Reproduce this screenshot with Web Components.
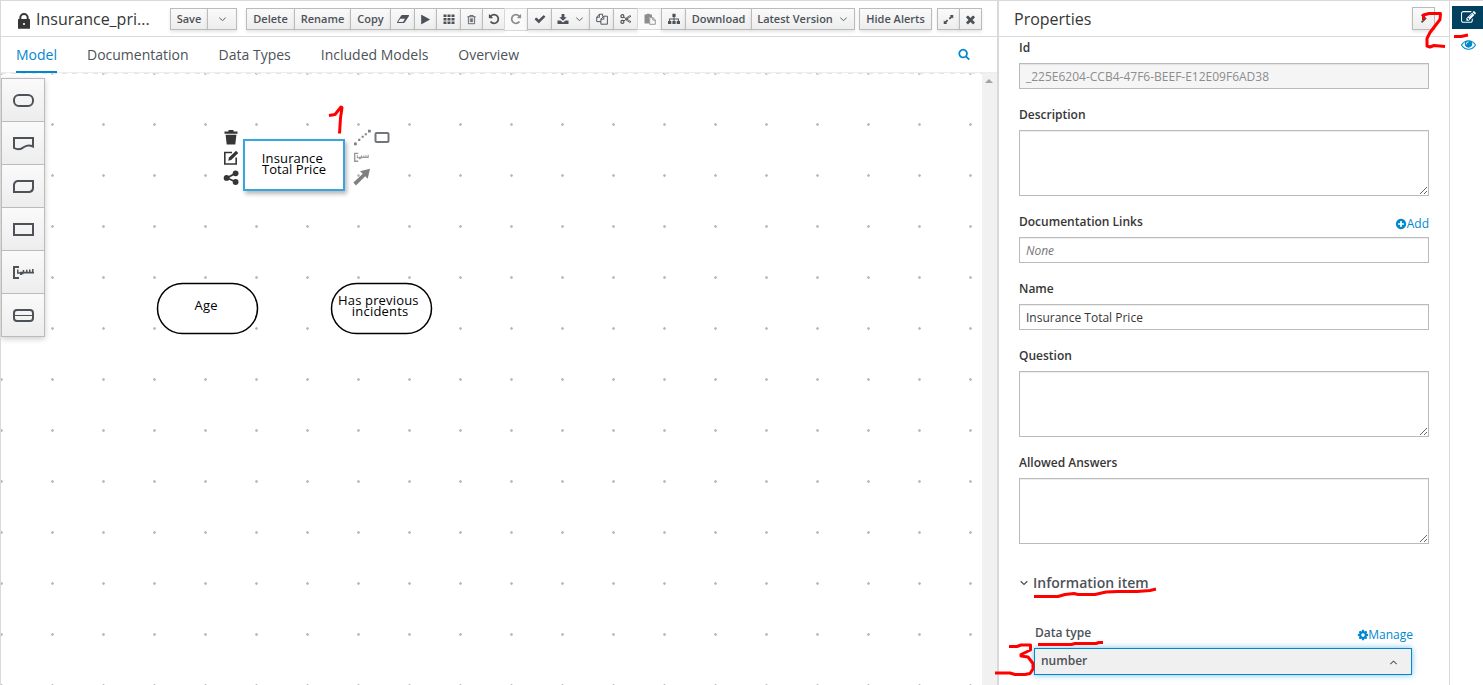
<!DOCTYPE html>
<html lang="en">
<head>
<meta charset="utf-8">
<title>Insurance pricing - DMN editor</title>
<style>
  html, body { margin: 0; height: 100%; overflow: hidden; background: #fff; }
  body { font-family: "Open Sans", "Liberation Sans", sans-serif; color: #363636; font-size: 12px; }
</style>
</head>
<body>
<dmn-app></dmn-app>
<script>
const FA = {
  check: 'M1671 566q0 40-28 68l-724 724-136 136q-28 28-68 28t-68-28l-136-136-362-362q-28-28-28-68t28-68l136-136q28-28 68-28t68 28l294 295 656-657q28-28 68-28t68 28l136 136q28 28 28 68z',
  play: 'M1576 927l-1328 738q-23 13-39.500 3t-16.500-36v-1472q0-26 16.500-36t39.500 3l1328 738q23 13 23 31t-23 31z',
  search: 'M1216 832q0-185-131.500-316.500t-316.500-131.500-316.500 131.500-131.500 316.500 131.500 316.500 316.500 131.500 316.500-131.500 131.500-316.500zm512 832q0 52-38 90t-90 38q-54 0-90-38l-343-342q-179 124-399 124-143 0-273.500-55.500t-225-150-150-225-55.500-273.500 55.500-273.500 150-225 225-150 273.500-55.500 273.500 55.500 225 150 150 225 55.500 273.500q0 220-124 399l343 343q37 37 37 90z',
  close: 'M1490 1322q0 40-28 68l-136 136q-28 28-68 28t-68-28l-294-294-294 294q-28 28-68 28t-68-28l-136-136q-28-28-28-68t28-68l294-294-294-294q-28-28-28-68t28-68l136-136q28-28 68-28t68 28l294 294 294-294q28-28 68-28t68 28l136 136q28 28 28 68t-28 68l-294 294 294 294q28 28 28 68z',
  plus: 'M1344 960v-128q0-26-19-45t-45-19h-256v-256q0-26-19-45t-45-19h-128q-26 0-45 19t-19 45v256h-256q-26 0-45 19t-19 45v128q0 26 19 45t45 19h256v256q0 26 19 45t45 19h128q26 0 45-19t19-45v-256h256q26 0 45-19t19-45zm320-64q0 209-103 385.500t-279.500 279.500-385.500 103-385.500-103-279.500-279.500-103-385.500 103-385.500 279.500-279.500 385.500-103 385.500 103 279.500 279.500 103 385.500z',
  cog: 'M1152 896q0-106-75-181t-181-75-181 75-75 181 75 181 181 75 181-75 75-181zm512-109v222q0 12-8 23t-20 13l-185 28q-19 54-39 91 35 50 107 138 10 12 10 25t-9 23q-27 37-99 108t-94 71q-12 0-26-9l-138-108q-44 23-91 38-16 136-29 186-7 28-36 28h-222q-14 0-24.500-8.500t-11.500-21.500l-28-184q-49-16-90-37l-141 107q-10 9-25 9-14 0-25-11-126-114-165-168-7-10-7-23 0-12 8-23 15-21 51-66.500t54-70.500q-27-50-41-99l-183-27q-13-2-21-12.500t-8-23.500v-222q0-12 8-23t19-13l186-28q14-46 39-92-40-57-107-138-10-12-10-24 0-10 9-23 26-36 98.500-107.500t94.500-71.500q13 0 26 10l138 107q44-23 91-38 16-136 29-186 7-28 36-28h222q14 0 24.500 8.500t11.500 21.500l28 184q49 16 90 37l142-107q9-9 24-9 13 0 25 10 129 119 165 170 7 8 7 22 0 12-8 23-15 21-51 66.500t-54 70.500q26 50 41 98l183 28q13 2 21 12.500t8 23.500z',
  redo: 'M1664 256v448q0 26-19 45t-45 19h-448q-42 0-59-40-17-39 14-69l138-138q-148-137-349-137-104 0-198.500 40.500t-163.500 109.500-109.500 163.500-40.500 198.500 40.500 198.500 109.500 163.500 163.500 109.500 198.500 40.500q119 0 225-52t179-147q7-10 23-12 15 0 25 9l137 138q9 8 9.500 20.500t-7.500 22.500q-109 132-264 204.500t-327 72.500q-156 0-298-61t-245-164-164-245-61-298 61-298 164-245 245-164 298-61q147 0 284.500 55.500t244.500 156.500l130-129q29-31 70-14 39 17 39 59z',
  undo: 'M1664 896q0 156-61 298t-164 245-245 164-298 61q-172 0-327-72.500t-264-204.500q-7-10-6.500-22.500t8.500-20.500l137-138q10-9 25-9 16 2 23 12 73 95 179 147t225 52q104 0 198.500-40.500t163.500-109.500 109.500-163.500 40.500-198.500-40.500-198.500-109.500-163.500-163.500-109.500-198.500-40.500q-98 0-188 35.500t-160 101.500l137 138q31 30 14 69-17 40-59 40h-448q-26 0-45-19t-19-45v-448q0-42 40-59 39-17 69 14l130 129q107-101 244.500-156.500t284.500-55.500q156 0 298 61t245 164 164 245 61 298z',
  eye: 'M1664 960q-152-236-381-353 61 104 61 225 0 185-131.500 316.500t-316.500 131.500-316.500-131.500-131.500-316.500q0-121 61-225-229 117-381 353 133 205 333.500 326.500t434.500 121.500 434.500-121.500 333.500-326.500zm-720-384q0-20-14-34t-34-14q-125 0-214.500 89.500t-89.500 214.500q0 20 14 34t34 14 34-14 14-34q0-86 61-147t147-61q20 0 34-14t14-34zm848 384q0 34-20 69-140 230-376.500 368.500t-499.500 138.500-499.500-139-376.500-368q-20-35-20-69t20-69q140-229 376.500-368t499.500-139 499.500 139 376.500 368q20 35 20 69z',
  edit: 'M888 1184l116-116-152-152-116 116v56h96v96h56zm440-720q-16-16-33 1l-350 350q-17 17-1 33t33-1l350-350q17-17 1-33zm80 594v190q0 119-84.500 203.500t-203.500 84.500h-832q-119 0-203.500-84.500t-84.500-203.500v-832q0-119 84.500-203.500t203.500-84.500h832q63 0 117 25 15 7 18 23 3 17-9 29l-49 49q-14 14-32 8-23-6-45-6h-832q-66 0-113 47t-47 113v832q0 66 47 113t113 47h832q66 0 113-47t47-113v-126q0-13 9-22l64-64q15-15 35-7t20 29zm-96-738l288 288-672 672h-288v-288zm444 132l-92 92-288-288 92-92q28-28 68-28t68 28l152 152q28 28 28 68t-28 68z'
};
/* Icons drawn on a 12 x 12 grid. */
const SMALL = {
  eraser: '<path fill-rule="evenodd" d="M5 2h6.500q.8 0 .5.8l-.3.6L7.600 9.600q-.3.4-.8.400H.6q-.8 0-.5-.8l.3-.6L4.200 2.400Q4.500 2 5 2zM3.300 5.700 1.300 8.500q-.2.400.3.400H6l2-3.200z"/>',
  grid: '<path d="M.5 1.500h3v2.500h-3zM4.500 1.500h3v2.500h-3zM8.500 1.500h3v2.500h-3zM.5 5h3v2.500h-3zM4.500 5h3v2.500h-3zM8.500 5h3v2.500h-3zM.5 8.500h3v2.500h-3zM4.500 8.500h3v2.500h-3zM8.500 8.500h3v2.500h-3z"/>',
  trash: '<path fill="none" stroke="currentColor" stroke-width=".9" d="M1.500 3h9M4.200 3V1.600h3.600V3M2.600 3v7.600h6.800V3M4.700 4.800v4M6 4.800v4M7.300 4.800v4"/>',
  export: '<path d="M4.600 1h2.800v3.200h2.400L6 7.800 2.200 4.200h2.400zM.5 7.500h3L6 9.600l2.500-2.100h3v3.600H.5z"/>',
  copy: '<path fill="none" stroke="currentColor" stroke-width=".95" d="M5 8.600H.7V4.200L3.400 1.200H6.600V3.500M.7 4.300h2.700V1.200M4.900 6 7.700 3.200h3.700v8H4.900zM4.900 6.200h2.900v-3"/>',
  cut: '<g fill="none" stroke="currentColor"><circle cx="2.400" cy="3.200" r="1.500" stroke-width="1.200"/><circle cx="2.400" cy="8.900" r="1.500" stroke-width="1.200"/><path stroke-width=".9" d="M3.700 4.100 11 8.700 9.800 9.500 5.500 6.500M3.700 8 11 3.300 9.800 2.600 5.500 5.700"/></g>',
  paste: '<path d="M.5 1.500h2.200V.7h3.100v.8H8V4H5.200v6.500H.5z"/><path fill="none" stroke="currentColor" stroke-width=".9" d="M5.700 4.600h3.200l2.400 2.300v4.400H5.700zM8.800 4.600v2.500h2.500"/>',
  sitemap: '<path d="M4.400.8h3.200v3.200H6.500v1.600h4.400v2.400H12v3H8.700v-3h1.200V6.500H6.500V8h1.100v3H4.400V8h1.100V6.500H2.100V8h1.200v3H0V8h1.100V5.600h4.400V4H4.400z"/>',
  expand: '<path d="M7.300 1H11.200V4.900L9.900 3.700 7.600 6 6.300 4.700 8.600 2.300zM.8 7.100 2.100 8.300 4.400 6 5.700 7.300 3.400 9.700 4.700 11H.8z"/>',
  down: '<path fill="none" stroke="currentColor" stroke-width="1" d="M2.500 4 6 7.200 9.500 4"/>',
  up: '<path fill="none" stroke="currentColor" stroke-width="1.100" d="M2.500 7.800 6 4.600 9.500 7.800"/>',
  caret: '<path fill="none" stroke="currentColor" stroke-width="1.500" d="M2 4 6 7.700 10 4"/>',
  lock: '<path fill="none" stroke="currentColor" stroke-width="2" d="M2.300 6.500V4.700A3.700 3.700 0 0 1 9.700 4.700V6.500"/><path fill-rule="evenodd" d="M.6 6h10.800q.6 0 .6.6v8.600q0 .6-.6.6H.6q-.6 0-.6-.6V6.600Q0 6 .6 6zM5.200 10v2h1.600v-2z"/>',
  chevron: '<path fill="none" stroke="currentColor" stroke-width="2.400" d="M3.400.8 8.600 6 3.400 11.200"/>'
};
/* Palette shapes share a 22 x 14 frame. */
const SHAPES = {
  input: '<rect x="1.500" y="1.500" width="19" height="11" rx="5"/>',
  knowledge: '<path d="M1.500 1.500h19v8.500C16.500 8 14.500 8.500 11.500 10.500 8.500 13 5 13.600 1.500 11.500z"/>',
  bkm: '<path d="M5 1.500H20.500V9Q20 12 17 12.500H1.500V5Q2 2 5 1.500z"/>',
  decision: '<rect x="1.500" y="1.500" width="19" height="11"/>',
  annotation: '<path d="M6.500 1.500H1.500V12.500H6.500"/><path fill="#4d5258" stroke="none" d="M4.500 4H6V6.800H7.500V6.300H10.200V4.500H11.700V6.300H13.500V4.300H15V6.300H16.500V4H18V6.300H19.500V3.500H21V6.300H21.500V8H11V8.800H9.500V9.600H7.500V8.300H4.500z"/>',
  service: '<rect x="1.500" y="1.500" width="19" height="11" rx="3"/><path stroke-width="1" d="M2 7h18"/>'
};
function define(name, css, render) {
  customElements.define(name, class extends HTMLElement {
    constructor() { super(); this.attachShadow({ mode: 'open' }); }
    connectedCallback() {
      this.shadowRoot.innerHTML = '<style>*{box-sizing:border-box}' + css + '</style>' + render(this);
    }
  });
}
define('ui-icon', ':host{display:inline-flex;flex:none}svg{display:block;overflow:visible}', el => {
  const n = el.getAttribute('name'), s = el.getAttribute('size') || 12;
  return FA[n]
    ? `<svg width="${s}" height="${s}" viewBox="0 0 1792 1792" fill="currentColor"><path d="${FA[n]}"/></svg>`
    : `<svg width="${s}" height="${s}" viewBox="0 0 12 12" fill="currentColor">${SMALL[n]}</svg>`;
});
define('tool-button', `
  :host{display:block;flex:none;box-sizing:border-box;height:22px;border:1px solid #bbb;background:linear-gradient(#fafafa,#ededed);
    box-shadow:0 2px 3px rgba(3,3,3,.1);color:#4d5258;font-size:11px;font-weight:600}
  :host([disabled]){background:#fafafa;border-color:#d8d8d8;color:#8b8d8f;box-shadow:none}
  div{height:20px;display:flex;align-items:center;justify-content:center;gap:5px;white-space:nowrap;line-height:20px}`,
  () => '<div><slot></slot></div>');
define('button-group', ':host{display:flex;flex:none}::slotted(*){margin-right:-1px}', () => '<slot></slot>');
define('tool-bar', `
  :host{display:flex;height:36px;align-items:flex-start;padding:7px 0 0 17px;box-sizing:border-box;border-bottom:1px solid #d9d9d9}
  .lock{margin:4px 0 0;width:12px;flex:none;color:#363636}
  h1{margin:-1px 0 0 6px;width:134px;flex:none;font:400 16px/24px "Open Sans",sans-serif;color:#363636;white-space:nowrap}
  .a{margin-right:10px}.b{margin-right:5px}.c{margin-right:6px}`, () => {
  const b = (w, inner) => `<tool-button style="width:${w}px">${inner}</tool-button>`;
  const i = (n, s = 12) => `<ui-icon name="${n}" size="${s}"></ui-icon>`;
  return `<span class="lock">${i('lock', 12)}</span><h1>Insurance_pri...</h1>
  <button-group class="a">${b(38, 'Save')}${b(30, i('down', 11))}</button-group>
  <button-group class="b">${b(49, 'Delete')}${b(57, 'Rename')}${b(41, 'Copy')}${b(25, i('eraser'))}${b(23, i('play', 11))}${b(25, i('grid'))}${b(23, i('trash', 11))}${b(23, i('undo', 12))}
  <tool-button disabled style="width:24px;height:23px">${i('redo', 12)}</tool-button>${b(25, i('check', 12))}${b(39, i('export') + i('down', 11))}${b(25, i('copy'))}${b(25, i('cut'))}
  <tool-button disabled style="width:25px">${i('paste')}</tool-button>${b(25, i('sitemap'))}${b(67, 'Download')}${b(104, 'Latest Version' + i('down', 11))}</button-group>
  <button-group class="c">${b(73, 'Hide Alerts')}</button-group>
  <button-group>${b(23, i('expand', 11))}${b(23, i('close', 13))}</button-group>`;
});
define('tab-bar', `
  :host{display:flex;height:36px;box-sizing:border-box;padding-left:15px;border-bottom:1px solid #ededed;font-size:14px;color:#4d5258;position:relative}
  a{height:36px;line-height:36px;margin-right:30px;white-space:nowrap}
  .on{color:#0088ce;border-bottom:2px solid #0088ce}
  ui-icon{margin:11px 27px 0 auto;color:#0088ce}`,
  () => `<a class="on">Model</a><a>Documentation</a><a>Data Types</a><a>Included Models</a><a>Overview</a><ui-icon name="search" size="12"></ui-icon>`);
define('shape-palette', `
  :host{position:absolute;left:0;top:5px;width:44px;border:1px solid #bbb;box-sizing:border-box;box-shadow:0 2px 6px rgba(3,3,3,.2)}
  div{height:43px;display:flex;align-items:center;justify-content:center;background:linear-gradient(#fafafa,#ededed);border-bottom:1px solid #bbb}
  div:last-child{height:42px;border:0}
  svg{fill:none;stroke:#4d5258;stroke-width:2;overflow:visible}`,
  () => Object.values(SHAPES).map(s => `<div><svg width="22" height="14"><g transform="translate(.5 .5)">${s}</g></svg></div>`).join(''));
/* A node sits at data-x / data-y of the diagram; its labels are relative to its own frame. */
define('dmn-node', ':host{position:absolute}svg{display:block;overflow:visible;font:13px "Open Sans",sans-serif}.sel{filter:drop-shadow(2px 3px 2px rgba(0,0,0,.28))}', el => {
  el.style.left = el.dataset.x + 'px'; el.style.top = el.dataset.y + 'px';
  const text = el.dataset.label.split('|').map(t => {
    const [s, x, y, w] = t.split(',');
    return `<text x="${x}" y="${y}" textLength="${w}" fill="#000">${s}</text>`;
  }).join('');
  const frame = el.hasAttribute('selected')
    ? '<rect class="sel" x="1" y="1" width="100" height="50" fill="#fff" stroke="#39a5dc" stroke-width="2"/>'
    : '<rect x="1.500" y="1.500" width="100" height="50" rx="25" fill="#fff" stroke="#000" stroke-width="1.500"/>';
  return `<svg width="102" height="52">${frame}${text}</svg>`;
});
/* Quick actions around the selected node: delete, edit and share on the left, connectors on the right. */
define('node-actions', ':host{position:absolute;left:221px;top:56px}svg{display:block;overflow:visible}', () => `<svg width="170" height="60" fill="#363636">
  <path d="M2.500 2.600h4V.9h5v1.700h4v2.100h-13zM3.600 5.700h10.800L13.300 15.500H4.700z"/>
  <path fill="none" stroke="#363636" stroke-width="1.600" d="M10 23.500H2.800V35H14.200V28.500"/><path d="M6.200 31.700 7 28.500 14 21.800 16.300 23.900 9.200 30.900z"/>
  <path fill="none" stroke="#363636" stroke-width="1.800" d="M13.500 44.200 5 49 13.500 52.800"/><circle cx="13.600" cy="44.300" r="2.900"/><circle cx="4.600" cy="48.900" r="2.900"/><circle cx="13.600" cy="53" r="2.900"/>
  <g fill="#808080"><path d="M132 13.500h2.800v2.800H132zM136.200 9.800h2.100v2.100h-2.100zM139.700 6.800h2V8.800h-2zM142.800 4.200h2v2h-2zM146 .8h2.800v2.800H146z"/>
  <path d="M131.400 53.600 140.800 44.700 138 42.200 148 39.800 145.700 49.800 143.200 47.300 134 56.600z"/></g>
  <rect x="153.500" y="4" width="13" height="9" rx="1" fill="none" stroke="#72767b" stroke-width="2"/>
  <g transform="translate(131.600 23.300) scale(.72)" fill="none" stroke="#999" stroke-width="2"><path d="M6.500 1.500H1.500V12.500H6.500"/><path fill="#999" stroke="none" d="M4.500 4H6V6.800H7.500V6.300H10.200V4.500H11.700V6.300H13.500V4.300H15V6.300H16.500V4H18V6.300H19.500V3.500H21V8H11V8.800H9.500V9.600H7.500V8.300H4.500z"/></g>
</svg>`);
define('diagram-canvas', `
  :host{display:grid;grid-template-columns:1fr 15px;position:relative;flex:1;overflow:hidden}
  .grid{background-image:radial-gradient(circle at 1.500px 1.500px,#bcbcbc 0 1px,transparent 1.600px);background-size:51px 51px;background-position:-1px -1px;position:relative}
  .grid::before{content:"";position:absolute;left:0;right:0;top:0;height:1px;background:repeating-linear-gradient(90deg,#e4e4e4 0 5.100px,transparent 5.100px 10.200px)}
  .bar{background:#f1f1f1;display:flex;justify-content:center;padding-top:6px}
  .bar i{width:0;height:0;border:4px solid transparent;border-top:0;border-bottom-color:#a3a3a3;margin-right:1px}`, () => `
  <div class="grid"></div><div class="bar"><i></i></div>
  <dmn-node selected data-x="242" data-y="66" data-label="Insurance,18.800,24,61|Total Price,19,35,64"></dmn-node>
  <dmn-node data-x="155" data-y="209" data-label="Age,38.500,28,23"></dmn-node>
  <dmn-node data-x="329" data-y="209" data-label="Has previous,8,23,80.500|incidents,21.800,34,56.500"></dmn-node>
  <node-actions></node-actions><shape-palette></shape-palette>`);
define('form-field', `
  :host{display:block;margin-bottom:15px}
  .top{height:20px;margin-bottom:6px;display:flex;justify-content:space-between}
  b{font-weight:600;line-height:22px;color:#363636}
  a{display:flex;align-items:center;color:#0088ce;line-height:20px;padding-top:2px;height:24px}
  a ui-icon{margin-right:-.7px}
  .in{height:26px;border:1px solid #bbb;line-height:26px;padding-left:6px;box-shadow:inset 0 1px 1px rgba(3,3,3,.075);color:#363636}
  .off{background:#f5f5f5;color:#8b8d8f}.hint{font-style:italic;color:#767676}
  textarea{display:block;width:100%;height:66px;border:1px solid #bbb;box-shadow:inset 0 1px 1px rgba(3,3,3,.075);margin:0;outline:0}`, el => {
  const d = el.dataset;
  return `<div class="top"><b>${d.label}</b>${d.link ? `<a><ui-icon name="plus" size="12"></ui-icon>${d.link}</a>` : ''}</div>` +
    (d.kind === 'area' ? '<textarea></textarea>' : `<div class="in ${d.kind || ''}">${d.value}</div>`);
});
define('type-select', `
  :host{display:block;margin:30px 17px 0 15px}
  .top{height:23px;display:flex;justify-content:space-between;padding-left:1px;margin-right:-1px;line-height:20px}
  b{font-weight:600;color:#4d5258}
  a{display:flex;align-items:center;color:#0088ce;height:24px}
  a ui-icon{margin-right:-.7px}
  .box{height:27px;margin-top:2px;border:1px solid #0088ce;background:#f0f0f0;box-shadow:0 0 6px rgba(0,136,206,.55);display:flex;align-items:center;justify-content:space-between;padding:0 12px 2px 6px;font-weight:600;color:#4d5258}`,
  () => `<div class="top"><b>Data type</b><a><ui-icon name="cog" size="12"></ui-icon>Manage</a></div><div class="box"><span>number</span><ui-icon name="up" size="11" style="margin-top:3px"></ui-icon></div>`);
define('properties-panel', `
  :host{display:block;overflow:hidden;border-right:1px solid #d9d9d9}
  header{height:36px;border-bottom:1px solid #d9d9d9;display:flex;justify-content:space-between;padding:0 14px 0 15px;font-size:16px;line-height:36px}
  tool-button{margin-top:6px;height:23px}
  .body{padding:0 20px}
  h2{display:flex;align-items:center;gap:4px;margin:29px 0 0;height:20px;font:600 14px/20px "Open Sans",sans-serif;color:#4d5258}`, () => `
  <header><span>Properties</span><tool-button style="width:23px"><ui-icon name="chevron" size="9"></ui-icon></tool-button></header>
  <div class="body">
    <form-field data-label="Id" data-kind="off" data-value="_225E6204-CCB4-47F6-BEEF-E12E09F6AD38"></form-field>
    <form-field data-label="Description" data-kind="area"></form-field>
    <form-field data-label="Documentation Links" data-link="Add" data-kind="hint" data-value="None"></form-field>
    <form-field data-label="Name" data-value="Insurance Total Price"></form-field>
    <form-field data-label="Question" data-kind="area"></form-field>
    <form-field data-label="Allowed Answers" data-kind="area"></form-field>
    <h2><ui-icon name="caret" size="10"></ui-icon>Information item</h2>
    <type-select></type-select>
  </div>`);
define('dock-rail', `
  :host{display:block;padding:5px 0 0 2px}
  .on,.off{height:23px;display:flex;align-items:center;justify-content:center;padding-left:2px}
  .on{background:#00415f;color:#fff}.off{color:#0088ce;margin-top:4px}`,
  () => `<div class="on"><ui-icon name="edit" size="15"></ui-icon></div><div class="off"><ui-icon name="eye" size="15"></ui-icon></div>`);
/* Hand-drawn red step markers laid over the whole window. */
define('step-markers', ':host{position:absolute;inset:0;pointer-events:none}svg{display:block}', () => `
  <svg width="1483" height="685" fill="none" stroke="#f00" stroke-width="3" stroke-linejoin="round">
  <path d="M329 115.500 335 114.500 341 107 342 107.500 340.500 118 339.500 133.500"/>
  <path d="M1423.500 20V15L1429 13.500H1440.500L1440 19.500 1430 32.500 1427 38.500V46L1430 47 1434 45.500 1445 46.500"/>
  <path d="M1454 36.500H1461L1468 35"/>
  <path d="M1009 646.500H1017L1021 645H1030.500V650L1021 654.500V656L1028 657 1033 663.500V669L1030 673.500 1025 674.500H1015L1010 673H995"/>
  <path d="M1034 596.500H1058L1065 594.500 1074 593.500 1078 594.500H1095L1106 592 1118 591.500 1137 591.500 1150 590.500 1156 589"/>
  <path d="M1038 644.500H1071.500L1075 643.500H1096L1099 642.500 1103 642.500"/></svg>`);
define('dmn-app', `
  :host{display:grid;grid-template-columns:999px 451px 33px;width:1483px;height:685px;border-top:1px solid #d9d9d9;box-sizing:border-box;position:relative;overflow:hidden}
  main{display:flex;flex-direction:column;border-left:1px solid #d9d9d9;border-right:2px solid #d9d9d9;min-width:0}
  step-markers{top:-1px}`, () => `
  <main><tool-bar></tool-bar><tab-bar></tab-bar><diagram-canvas></diagram-canvas></main>
  <properties-panel></properties-panel><dock-rail></dock-rail><step-markers></step-markers>`);
</script>
</body>
</html>
